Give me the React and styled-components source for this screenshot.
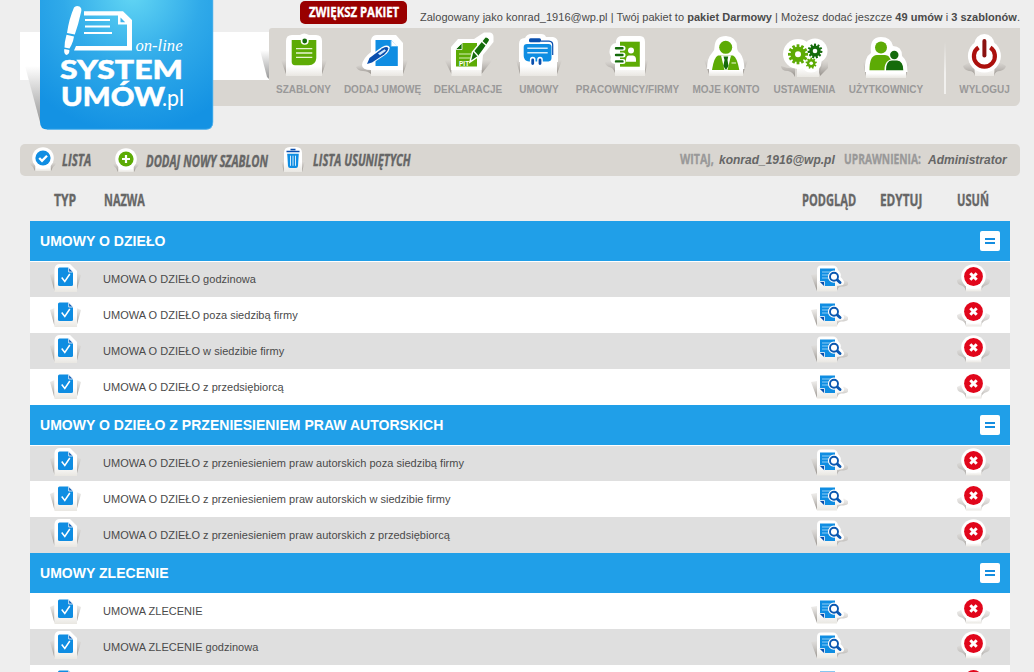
import React, { useLayoutEffect, useRef, useState } from "react";
import styled, { createGlobalStyle, css } from "styled-components";

const GlobalStyle = createGlobalStyle`
  * { box-sizing: border-box; }
  html, body { margin: 0; padding: 0; }
  body {
    background: #eeeeee;
    color: #4a4a4a;
    font-family: "Liberation Sans", Arial, sans-serif;
    font-size: 11px;
    height: 672px;
    overflow: hidden;
  }
  svg { display: block; flex: none; overflow: visible; }
`;

/* ---------- condensed lettering ---------- */

const CondensedBox = styled.span`
  display: block;
  flex: none;
  width: ${(p) => p.$width}px;
  height: ${(p) => p.$size + 4}px;
  line-height: ${(p) => p.$size + 4}px;
  font-family: "Open Sans", "Noto Sans", sans-serif;
  font-weight: 700;
  font-size: ${(p) => p.$size}px;
  font-style: ${(p) => (p.$italic ? "italic" : "normal")};
  color: ${(p) => p.$color || "#666666"};
  -webkit-text-stroke: 0.35px currentColor;
  white-space: nowrap;
  margin-left: ${(p) => p.$gap || 0}px;
`;

const CondensedText = styled.span`
  display: inline-block;
  transform-origin: 0 50%;
`;

function Condensed({ children, width, size = 16, ...rest }) {
  const ref = useRef(null);
  const [scale, setScale] = useState(0.7);
  useLayoutEffect(() => {
    setScale(width / ref.current.offsetWidth);
  }, [width]);
  return (
    <CondensedBox $width={width} $size={size} {...rest}>
      <CondensedText ref={ref} style={{ transform: `scaleX(${scale})` }}>
        {children}
      </CondensedText>
    </CondensedBox>
  );
}

/* ---------- header ---------- */

const Page = styled.div`
  width: 1000px;
  margin-left: 20px;
`;

const Header = styled.header`
  position: relative;
  height: 144px;
`;

const TopLine = styled.div`
  display: flex;
  align-items: flex-start;
  height: 28px;
  padding: 1px 0 0 280px;
`;

const UpgradeButton = styled.a`
  display: flex;
  align-items: center;
  width: 107px;
  height: 23px;
  padding-left: 9px;
  border-radius: 5px;
  background: #990000;
`;

const AccountInfo = styled.p`
  margin: 9px 0 0 13px;
  line-height: 14px;
  letter-spacing: 0.028px;
  white-space: nowrap;
`;

const HeaderRow = styled.div`
  display: flex;
  height: 78px;
`;

const Ribbon = styled.div`
  width: 249px;
  padding-top: 4px;
`;

const RibbonBand = styled.div`
  display: flex;
  justify-content: flex-end;
  height: 48px;
  background: #ffffff;
`;

const RibbonTail = styled.div`
  height: 26px;
  margin-left: 180px;
  background: #d9d6d1;
`;

const Nav = styled.nav`
  display: flex;
  gap: 13px;
  width: 751px;
  padding-left: 7px;
  border-radius: 3px 0 6px 0;
  background: #d9d6d1;
`;

const NavItem = styled.a`
  display: flex;
  flex-direction: column;
  align-items: center;
  width: ${(p) => p.$width}px;
  padding-top: 4px;
  color: #999999;
  font-size: 10px;
  font-weight: bold;
  line-height: 12px;
  white-space: nowrap;
`;

const NavLabel = styled.span`
  margin-top: 6px;
`;

const Divider = styled.i`
  width: 2px;
  height: 52px;
  margin: 14px 0 0 8px;
  background: linear-gradient(#d9d6d1, #f1f0ee 60%, #f1f0ee);
`;

const LogoLink = styled.a`
  position: absolute;
  left: 6px;
  top: 0;
`;

function Logo() {
  return (
    <LogoLink>
      <svg width="188" height="131" viewBox="26 0 188 131">
        <defs>
          <radialGradient id="logoBg" gradientUnits="userSpaceOnUse" cx="132" cy="-6" r="138">
            <stop offset="0" stopColor="#62d6f4" />
            <stop offset="0.5" stopColor="#30aae9" />
            <stop offset="1" stopColor="#1492e3" />
          </radialGradient>
          <linearGradient id="logoFold" x1="0" y1="0" x2="0" y2="1">
            <stop offset="0" stopColor="#ffffff" />
            <stop offset="1" stopColor="#989898" />
          </linearGradient>
        </defs>
        <path d="M25 66H40V122Z" fill="url(#logoFold)" />
        <path d="M40 0H213V122Q213 129.500 206 129.500H47.500Q40 129.500 40 122Z" fill="url(#logoBg)" />
        <path d="M47 129.300H206Q212.800 129 212.800 122V0" fill="none" stroke="#55b4ee" strokeWidth=".8" />
        <g fill="#fff">
          <path d="M74 7.500Q76 5 79.500 6.500Q82 8 81.200 11.500Q78.500 24 74.800 34.500L67 33Q69 19 74 7.500Z" />
          <path d="M66.500 34.800L74 36.500L73 41Q71.500 45.500 69.500 48.500L64.500 47.500Q64.500 42 66.500 34.800Z" />
          <path d="M64.300 49L69.300 50Q69.800 54 66.500 55Q63.500 54 64.300 49Z" />
          <path d="M84 11.300H123L132 20V50.500H74L76 46H127V24.500H118V15.500H84Z" />
          <path d="M120.500 17.500V22.200H125.200Z" fill="#3fb3ea" />
        </g>
        <g stroke="#fff" strokeWidth="2">
          <path d="M85 20H110M85 26.500H110M84 33H112" />
        </g>
        <text x="135.500" y="51" textLength="47" lengthAdjust="spacingAndGlyphs" fontFamily="'Liberation Serif', serif" fontStyle="italic" fontSize="17" fill="#fff">on-line</text>
        <g fontFamily="Lato, sans-serif" fill="#fff">
          <text x="60" y="78.500" textLength="123" lengthAdjust="spacingAndGlyphs" fontWeight="900" fontSize="27" stroke="#fff" strokeWidth=".5">SYSTEM</text>
          <text x="61" y="106" textLength="104" lengthAdjust="spacingAndGlyphs" fontWeight="900" fontSize="27" stroke="#fff" strokeWidth=".5">UMÓW</text>
          <text x="162" y="106" textLength="22" lengthAdjust="spacingAndGlyphs" fontWeight="400" fontSize="23">.pl</text>
        </g>
      </svg>
    </LogoLink>
  );
}

function RibbonFold() {
  return (
    <svg width="9" height="48" viewBox="0 0 9 48">
      <path d="M0 18H9V47L7 45Z" fill="url(#logoFold)" />
    </svg>
  );
}

/* ---------- icons of the main menu ---------- */

const BLUE = "#0f8de2";
const NAVY = "#0a4fae";
const GREEN = "#5dab05";
const DARK = "#146b0b";

function IconDefs() {
  return (
    <svg width="0" height="0" style={{ position: "absolute" }}>
      <defs>
        <linearGradient id="pocket" x1="0" y1="0" x2="0" y2="1">
          <stop offset="0" stopColor="#ffffff" />
          <stop offset="0.6" stopColor="#ffffff" />
          <stop offset="1" stopColor="#e9e7e2" />
        </linearGradient>
        <linearGradient id="shade" x1="0" y1="0" x2="0" y2="1">
          <stop offset="0" stopColor="#dedbd7" stopOpacity=".5" />
          <stop offset="1" stopColor="#928d88" />
        </linearGradient>
      </defs>
    </svg>
  );
}

function Pocket({ left, right, top = 52, bottom = 76, spreadL = 5, spreadR = 5 }) {
  return (
    <>
      <path d={`M${left - spreadL} ${bottom - 16}L${left} ${bottom - 17}V${bottom - 2}Z`} fill="url(#shade)" />
      <path d={`M${right + spreadR} ${bottom - 16}L${right} ${bottom - 17}V${bottom - 2}Z`} fill="url(#shade)" />
      <path d={`M${left} ${top}H${right}V${bottom}H${left}Z`} fill="url(#pocket)" />
    </>
  );
}

function MenuIcon({ children }) {
  return (
    <svg width="60" height="46" viewBox="-30 32 60 46">
      {children}
    </svg>
  );
}

function Gear({ x, y, r, teeth, fill, hole }) {
  return (
    <g transform={`translate(${x} ${y})`}>
      <circle r={r * 0.76} fill={fill} />
      {Array.from({ length: teeth }, (_, i) => (
        <rect key={i} x={-r * 0.14} y={-r} width={r * 0.28} height={r * 0.4} fill={fill} transform={`rotate(${(360 / teeth) * i})`} />
      ))}
      <circle r={hole} fill="#fff" />
    </g>
  );
}

const icons = {
  templates: (
    <MenuIcon>
      <Pocket left={-18} right={18} />
      <path d="M-18 60V41Q-18 35 -12 35H-4Q0 32 5 35H12Q18 35 18 41V60Z" fill="#fff" />
      <path d="M-12.300 40H12.300V58Q12 65 4.500 65.300H-9Q-12.300 65 -12.300 62Z" fill={GREEN} />
      <circle cx=".7" cy="40.700" r="4" fill="#fff" />
      <circle cx=".7" cy="41" r="2.400" fill={DARK} />
      <path d="M-8 48.700H8.300M-8 53H8.300M-8 57.300H8.300" stroke="#e6f5cf" strokeWidth="1.300" />
    </MenuIcon>
  ),
  addContract: (
    <MenuIcon>
      <path d="M-27 67Q-20 62 -12 65V74Q-15 71 -20 71Q-25 71 -27 67Z" fill="url(#shade)" />
      <Pocket left={-12} right={20} spreadL={0} />
      <path d="M-12 40Q-11 35 -6 35H13L20 43V70H-12Q-21 70 -21 65Q-20 58 -12 52Z" fill="#fff" />
      <path d="M-7.500 40H8L14.800 47V66H-7.500Z" fill={BLUE} />
      <path d="M8 40V46.500H14.800" fill="#fff" stroke="#58b2ee" />
      <path d="M-17.500 65L-14.500 56.500L-1 47Q5.500 44 6.700 47.500Q6.500 51.500 2 55L-10 63Z" fill="#fff" />
      <path d="M-16 64L-13.500 58L-.5 48.300Q4.500 45.800 5.300 48.500Q5 51.500 1.500 54.300L-11 62.500Z" fill={NAVY} />
      <path d="M-5 53.500L1.500 49.300L3 50.800L-3 55.200Z" fill="#cfe6f8" />
    </MenuIcon>
  ),
  declarations: (
    <MenuIcon>
      <Pocket left={-16.500} right={13.500} spreadL={7} spreadR={11} />
      <path d="M-17 70V47L-10 39H6L16 32.500H22Q25.500 33 25.500 37V42L15 55L13.500 70Z" fill="#fff" />
      <path d="M-12 49.500L-6 43H9V66.500H-12Z" fill={GREEN} />
      <path d="M-12.500 49.500H-6V43Z" fill={DARK} stroke="#fff" strokeWidth=".8" />
      <path d="M-9 54H3M-9 58H2" stroke="#d8efb8" strokeWidth="1.200" />
      <text x="-9" y="66.200" fontFamily="Liberation Sans, Arial, sans-serif" fontWeight="bold" fontSize="6.500" fill="#fff">PIT</text>
      <path d="M2 62L4.500 52L17 37Q19 36 22 39.500Q21.500 42 11 56Z" fill={DARK} stroke="#fff" strokeWidth="1.500" />
      <path d="M13.500 41L18.500 45.500M5.500 51L10 56" stroke="#fff" strokeWidth="1.300" />
    </MenuIcon>
  ),
  contracts: (
    <MenuIcon>
      <Pocket left={-19} right={18} spreadL={4} spreadR={5} />
      <path d="M-20 62V44Q-20 38 -14 38Q-12 34 -8 34H2Q6 34 7 37H14Q19 38 19 43V62Z" fill="#fff" />
      <rect x="-10" y="38.300" width="12" height="4" rx="1.500" fill={NAVY} />
      <path d="M2 41.200H10Q13.700 41.500 13.700 45V55" fill="none" stroke={NAVY} strokeWidth="1.200" />
      <path d="M-15.300 47Q-15.300 44 -12 44H9.500Q12.500 44 12.500 47V58Q12.500 61 9.500 61.500H-10Q-15 61 -15.300 56Z" fill={BLUE} />
      <path d="M-11.700 48.300H8.700M-11.700 52.700H8.700" stroke="#d5ebfa" strokeWidth="1.500" />
      <path d="M-6.300 59.500V64M1 59.500V64" stroke="#fff" strokeWidth="5.600" strokeLinecap="round" />
      <path d="M-6.300 60V63.500M1 60V63.500" stroke={NAVY} strokeWidth="2.800" strokeLinecap="round" />
    </MenuIcon>
  ),
  staff: (
    <MenuIcon>
      <path d="M-23 62Q-19 59 -13 62V73Q-15 67 -19 67Q-23 65 -23 62Z" fill="url(#shade)" />
      <Pocket left={-13} right={17} spreadL={0} spreadR={3} />
      <path d="M-13 70V64Q-19 63 -17 57Q-20 52 -17 46Q-15 43 -12 43V41Q-11 36 -6 36H12Q17 36 17 42V70Z" fill="#fff" />
      <path d="M-8 41.700H11.800V66.700H-8Z" fill={GREEN} />
      <path d="M-12 48.300H-5M-12 55H-5M-12 61.400H-5" stroke="#fff" strokeWidth="5" strokeLinecap="round" />
      <path d="M-12 48.300H-5.500M-12 55H-5.500M-12 61.400H-5.500" stroke={DARK} strokeWidth="2.400" strokeLinecap="round" />
      <circle cx="3" cy="50.500" r="3" fill="#fff" />
      <path d="M-2 61.800V59.500Q-1.500 55.500 1 55.500H5Q8 56 8 59.500V61.800Z" fill="#fff" />
    </MenuIcon>
  ),
  account: (
    <MenuIcon>
      <Pocket left={-17} right={17} top={62} />
      <path d="M-19 69Q-19 58 -14 53Q-11 50 -11.500 47Q-11 36 0 36Q11 37 11 47Q11 51 14 53Q18 58 18.500 69Z" fill="#fff" />
      <circle cx="-.3" cy="47.300" r="6.500" fill={GREEN} />
      <path d="M-14 70Q-12 57 -8 55.500H7Q11 57 13.300 70Z" fill={GREEN} />
      <path d="M-5 55.500L-1.500 70H1.500L5 55.500Z" fill="#fff" />
      <path d="M-2.500 56.500H2.200L1.500 60L2.500 66L0 70L-2.700 66L-1.500 60Z" fill={DARK} />
      <path d="M5.500 63H10" stroke="#d8efb8" strokeWidth="1.200" />
    </MenuIcon>
  ),
  settings: (
    <MenuIcon>
      <path d="M-24 60V66Q-16 69 -10 68V77Q-12 72 -17 71Q-24 71 -24 66Z" fill="url(#shade)" />
      <path d="M23 60V68L15 76V62Z" fill="url(#shade)" />
      <Pocket left={-8} right={14} bottom={77} spreadL={0} spreadR={5} />
      <g fill="#fff">
        <circle cx="-7" cy="54" r="15" />
        <circle cx="10" cy="51" r="12.500" />
        <circle cx="6" cy="62" r="10.500" />
      </g>
      <Gear x={-7} y={54.300} r={10} teeth={12} fill={GREEN} hole={3} />
      <Gear x={10} y={51} r={7.400} teeth={11} fill={DARK} hole={2.300} />
      <Gear x={6.200} y={63.200} r={5.600} teeth={9} fill={GREEN} hole={1.800} />
    </MenuIcon>
  ),
  users: (
    <MenuIcon>
      <Pocket left={-20} right={20} top={66} bottom={78} spreadL={3} spreadR={3} />
      <path d="M-21 72Q-22 57 -15 53Q-17 37 -5 37Q5 37 7 46Q16 46 16 56Q22 61 21.500 72Z" fill="#fff" />
      <circle cx="-5" cy="47.500" r="6" fill={GREEN} />
      <path d="M-16.500 70.200Q-16.500 55 -9 55H-1Q4 55 5.500 62V70.200Z" fill={GREEN} />
      <circle cx="8.300" cy="55" r="5.400" fill="#fff" />
      <path d="M-1.500 71Q-2 59 8.500 59Q19 60 19 71Z" fill="#fff" />
      <circle cx="8.300" cy="55" r="4.200" fill={DARK} />
      <path d="M0 70.200Q0 60.500 6 60.500H11Q17.300 61 17.300 70.200Z" fill={DARK} />
    </MenuIcon>
  ),
  logout: (
    <MenuIcon>
      <path d="M-22 66Q-16 62 -12 61L-10 76Q-11 71 -16 71Q-21 70 -22 66Z" fill="url(#shade)" />
      <path d="M21 66Q15 62 11 61L9 76Q10 71 15 71Q20 70 21 66Z" fill="url(#shade)" />
      <Pocket left={-10} right={9} spreadL={0} spreadR={0} />
      <circle cx="-.6" cy="56" r="16.500" fill="#fff" />
      <circle cx="-.6" cy="44" r="10" fill="#fff" />
      <path d="M-6.500 47.500A10.500 10.500 0 1 0 5.300 47.500" fill="none" stroke="#ac100d" strokeWidth="4.200" />
      <path d="M-.6 41V55.500" stroke="#8b1210" strokeWidth="4" strokeLinecap="round" />
    </MenuIcon>
  ),
};

const menu = [
  { label: "SZABLONY", icon: "templates", width: 55 },
  { label: "DODAJ UMOWĘ", icon: "addContract", width: 77 },
  { label: "DEKLARACJE", icon: "declarations", width: 68 },
  { label: "UMOWY", icon: "contracts", width: 48 },
  { label: "PRACOWNICY/FIRMY", icon: "staff", width: 103 },
  { label: "MOJE KONTO", icon: "account", width: 68 },
  { label: "USTAWIENIA", icon: "settings", width: 63 },
  { label: "UŻYTKOWNICY", icon: "users", width: 74 },
];

/* ---------- toolbar ---------- */

const Toolbar = styled.div`
  display: flex;
  align-items: flex-start;
  height: 32px;
  padding: 0 13px 0 8px;
  border-radius: 5px;
  background: #d9d6d1;
`;

const ToolLink = styled.a`
  display: flex;
  align-items: flex-start;
  padding-top: ${(p) => p.$drop || 0}px;
  margin-right: ${(p) => p.$after || 0}px;
`;

const ToolLabel = styled.span`
  padding-top: 6px;
`;

const Welcome = styled.div`
  display: flex;
  margin-left: auto;
  padding-top: 5px;
`;

const WelcomeValue = styled.span`
  width: ${(p) => p.$width}px;
  margin-left: ${(p) => p.$gap}px;
  font-size: 12px;
  font-weight: bold;
  font-style: italic;
  line-height: 22px;
  color: #666666;
  white-space: nowrap;
`;

function RoundTool({ color, children }) {
  return (
    <svg width="30" height="30" viewBox="-15 -14 30 30">
      <path d="M-13 4L-8 4V13L-10 9Q-13 7 -13 4ZM13 4L8 4V13L10 9Q13 7 13 4Z" fill="url(#shade)" />
      <path d="M-7.500 4H7.500V13H-7.500Z" fill="url(#pocket)" />
      <circle r="10.800" fill="#fff" />
      <circle r="7.600" fill={color} />
      {children}
    </svg>
  );
}

function TrashTool() {
  return (
    <svg width="30" height="30" viewBox="-15 -15 30 30">
      <path d="M-12 2L-9 2V13ZM12 2L9 2V13Z" fill="url(#shade)" />
      <path d="M-9 13V-6Q-9 -12 -3 -12H3Q9 -12 9 -6V13Z" fill="url(#pocket)" />
      <path d="M-2.500 -9.500H2.500M-6.500 -7.500H6.500" stroke={NAVY} strokeWidth="1.700" />
      <path d="M-5.800 -5.300H5.800L5 7Q4.800 9 3 9H-3Q-4.800 9 -5 7Z" fill={BLUE} />
      <path d="M-2.500 -3.300V6.800M0 -3.300V6.800M2.500 -3.300V6.800" stroke="#d5ebfa" strokeWidth="1" />
    </svg>
  );
}

/* ---------- table ---------- */

const Table = styled.main`
  width: 980px;
  margin: 0 10px;
`;

const HeadRow = styled.div`
  display: flex;
  height: 45px;
  padding: 14px 0 0 24px;
`;

const GroupHeader = styled.div`
  display: flex;
  align-items: center;
  justify-content: space-between;
  height: 40px;
  padding: 0 10px;
  background: #209fe8;
  color: #ffffff;
  font-size: 14px;
  font-weight: bold;
  letter-spacing: 0.03px;
`;

const Toggle = styled.button`
  display: flex;
  flex-direction: column;
  justify-content: center;
  align-items: center;
  gap: 2px;
  width: 20px;
  height: 20px;
  padding: 0;
  border: 0;
  border-radius: 2px;
  background: #ffffff;
  &::before,
  &::after {
    content: "";
    width: 10px;
    height: 2px;
    background: #148de0;
  }
`;

const Row = styled.div`
  display: grid;
  grid-template-columns: 73px 709px 88px 56px 54px;
  height: 36px;
  background: ${(p) => (p.$shaded ? "#dfdfdf" : "#ffffff")};
  ${(p) =>
    p.$first &&
    css`
      border-top: 1px solid #ffffff;
    `}
`;

const IconCell = styled.div`
  padding-left: ${(p) => p.$inset || 0}px;
`;

const NameCell = styled.div`
  line-height: 14px;
  padding-top: ${(p) => (p.$first ? 10 : 11)}px;
  letter-spacing: 0.02px;
`;

function TypeIcon() {
  return (
    <svg width="32" height="34" viewBox="50 0 32 34">
      <path d="M50 13L54.500 11V29ZM81 13L76.500 11V29Z" fill="url(#shade)" />
      <path d="M54.500 30V7Q55 2 60 2H70L77 9V30Z" fill="url(#pocket)" />
      <path d="M58 7Q58 5.500 59.500 5.500H68.500L73 10V22.500Q73 24 71.500 24H59.500Q58 24 58 22.500Z" fill={BLUE} />
      <path d="M68.700 5.500V10H73.200Z" fill="#1760b7" stroke="#fff" strokeWidth=".8" />
      <path d="M61.700 15.500L64.800 19.500L69.800 12" fill="none" stroke="#fff" strokeWidth="1.500" />
    </svg>
  );
}

function PreviewIcon() {
  return (
    <svg width="36" height="34" viewBox="812 0 36 34">
      <path d="M811 13L817 12V29Z" fill="url(#shade)" />
      <path d="M837 28.500V21L844 17.500L848 20V22.500Q847 24.500 841 24.500Q838 25 837 28.500Z" fill="url(#shade)" opacity=".7" />
      <path d="M817 29.500V8Q817 3.500 821 3.500H833Q837 3.500 838 8Q842 12 840.500 15Q846 20 843 23L837 24V29.500Z" fill="url(#pocket)" />
      <path d="M820 6.500H835V24H824.500L820 19.500Z" fill={BLUE} />
      <path d="M819.500 19.500H824.500V24.500" fill={NAVY} stroke="#fff" strokeWidth=".8" />
      <path d="M822 10H832M822 13H830M822 16H829" stroke="#8cccf5" strokeWidth="1" />
      <circle cx="834" cy="14.700" r="4.500" fill="#fff" stroke="#fff" strokeWidth="3.200" />
      <path d="M837.300 18L840 20.500" stroke="#0a57b0" strokeWidth="3" strokeLinecap="round" />
      <circle cx="834" cy="14.700" r="4" fill="#fff" stroke="#0a57b0" strokeWidth="1.900" />
    </svg>
  );
}

function DeleteIcon() {
  return (
    <svg width="34" height="34" viewBox="956 0 34 34">
      <path d="M957 18L963 15L966 22V29Q965 24 960 23Q957 22 957 18ZM990 18L984 15L981 22V29Q982 24 987 23Q990 22 990 18Z" fill="url(#shade)" opacity=".75" />
      <path d="M966 20H981.500V29.500H966Z" fill="url(#pocket)" />
      <circle cx="973.500" cy="14.500" r="12.300" fill="#fff" />
      <circle cx="973.500" cy="14.500" r="9.400" fill="#e1061b" />
      <path d="M970.300 11.300L976.700 17.700M976.700 11.300L970.300 17.700" stroke="#fff" strokeWidth="3" />
    </svg>
  );
}

const groups = [
  {
    title: "UMOWY O DZIEŁO",
    shadedFirst: true,
    rows: [
      "UMOWA O DZIEŁO godzinowa",
      "UMOWA O DZIEŁO poza siedzibą firmy",
      "UMOWA O DZIEŁO w siedzibie firmy",
      "UMOWA O DZIEŁO z przedsiębiorcą",
    ],
  },
  {
    title: "UMOWY O DZIEŁO Z PRZENIESIENIEM PRAW AUTORSKICH",
    shadedFirst: true,
    rows: [
      "UMOWA O DZIEŁO z przeniesieniem praw autorskich poza siedzibą firmy",
      "UMOWA O DZIEŁO z przeniesieniem praw autorskich w siedzibie firmy",
      "UMOWA O DZIEŁO z przeniesieniem praw autorskich z przedsiębiorcą",
    ],
  },
  {
    title: "UMOWY ZLECENIE",
    shadedFirst: false,
    rows: ["UMOWA ZLECENIE", "UMOWA ZLECENIE godzinowa", ""],
  },
];

export default function App() {
  return (
    <>
      <GlobalStyle />
      <IconDefs />
      <Page>
        <Header>
          <TopLine>
            <UpgradeButton>
              <Condensed width={90} size={14.500} $color="#ffffff">ZWIĘKSZ PAKIET</Condensed>
            </UpgradeButton>
            <AccountInfo>
              Zalogowany jako konrad_1916@wp.pl | Twój pakiet to <b>pakiet Darmowy</b> | Możesz dodać jeszcze <b>49 umów</b> i <b>3 szablonów</b>.
            </AccountInfo>
          </TopLine>
          <HeaderRow>
            <Ribbon>
              <RibbonBand>
                <RibbonFold />
              </RibbonBand>
              <RibbonTail />
            </Ribbon>
            <Nav>
              {menu.map((m) => (
                <NavItem key={m.label} $width={m.width}>
                  {icons[m.icon]}
                  <NavLabel>{m.label}</NavLabel>
                </NavItem>
              ))}
              <Divider />
              <NavItem $width={51}>
                {icons.logout}
                <NavLabel>WYLOGUJ</NavLabel>
              </NavItem>
            </Nav>
          </HeaderRow>
          <Logo />
        </Header>

        <Toolbar>
          <ToolLink $after={20}>
            <RoundTool color={BLUE}>
              <path d="M-3.800 0L-1 2.800L4 -2.300" fill="none" stroke="#fff" strokeWidth="2.300" />
            </RoundTool>
            <ToolLabel>
              <Condensed width={29} $gap={4} $italic>LISTA</Condensed>
            </ToolLabel>
          </ToolLink>
          <ToolLink $drop={1} $after={10}>
            <RoundTool color={GREEN}>
              <path d="M-4 0H4M0 -4V4" stroke="#fff" strokeWidth="2.200" />
            </RoundTool>
            <ToolLabel>
              <Condensed width={122} $gap={5} $italic>DODAJ NOWY SZABLON</Condensed>
            </ToolLabel>
          </ToolLink>
          <ToolLink>
            <TrashTool />
            <ToolLabel>
              <Condensed width={98} $gap={5} $italic>LISTA USUNIĘTYCH</Condensed>
            </ToolLabel>
          </ToolLink>
          <Welcome>
            <Condensed width={34} size={15} $color="#999999">WITAJ,</Condensed>
            <WelcomeValue $gap={5} $width={117}>konrad_1916@wp.pl</WelcomeValue>
            <Condensed width={77} size={15} $gap={8} $color="#999999">UPRAWNIENIA:</Condensed>
            <WelcomeValue $gap={7} $width={79}>Administrator</WelcomeValue>
          </Welcome>
        </Toolbar>

        <Table>
          <HeadRow>
            <Condensed width={22}>TYP</Condensed>
            <Condensed width={41} $gap={28}>NAZWA</Condensed>
            <Condensed width={54} $gap={657}>PODGLĄD</Condensed>
            <Condensed width={42} $gap={24}>EDYTUJ</Condensed>
            <Condensed width={32} $gap={35}>USUŃ</Condensed>
          </HeadRow>
          {groups.map((g) => (
            <section key={g.title}>
              <GroupHeader>
                {g.title}
                <Toggle />
              </GroupHeader>
              {g.rows.map((name, i) => (
                <Row key={i} $first={i === 0} $shaded={(i % 2 === 0) === g.shadedFirst}>
                  <IconCell $inset={20}>
                    <TypeIcon />
                  </IconCell>
                  <NameCell $first={i === 0}>{name}</NameCell>
                  <IconCell>
                    <PreviewIcon />
                  </IconCell>
                  <IconCell />
                  <IconCell>
                    <DeleteIcon />
                  </IconCell>
                </Row>
              ))}
            </section>
          ))}
        </Table>
      </Page>
    </>
  );
}
